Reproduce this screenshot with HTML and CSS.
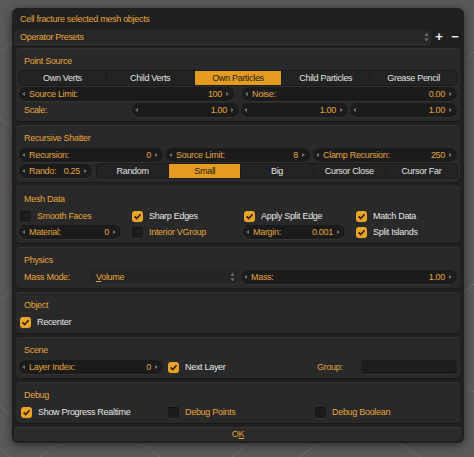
FILE: index.html
```html
<!DOCTYPE html>
<html lang="en">
<head>
  <meta charset="UTF-8">
  <title>Cell fracture selected mesh objects</title>
  <link rel="stylesheet" href="styles.css">
</head>
<body>
  <svg class="viewport-grid" width="474" height="457" viewBox="0 0 474 457">
    <path d="M0 52 L12 42 M0 118 L12 128 M0 300 L12 290 M0 405 L12 418 M0 448 L10 457 M60 443 L40 457 M140 443 L160 457 M250 443 L232 457 M318 443 L300 457 M400 443 L420 457 M464 60 L474 52 M464 380 L474 392" stroke="#6a6a6a" stroke-width="1" fill="none"/>
    <path d="M0 176 L12 186" stroke="#7a5656" stroke-width="1"/>
    <path d="M464 292 L474 284" stroke="#5f7a5f" stroke-width="1"/>
  </svg>

  <svg style="display: none;">
    <symbol viewBox="0 0 11 11" id="icon-check">
      <path d="M2.6 5.4 L4.7 7.6 L8.6 3.2" fill="none" stroke="#3a2604" stroke-width="1.7"/>
    </symbol>
    <symbol viewBox="0 0 5 10" id="icon-updown">
      <path d="M2.5 0.5 L4.5 3.8 L0.5 3.8 Z M2.5 9.5 L4.5 6.2 L0.5 6.2 Z" fill="#6c6c6c"/>
    </symbol>
  </svg>

  <div class="window">
    <div class="title">Cell fracture selected mesh objects</div>

    <div class="presets">
      <div class="preset-menu">
        <span>Operator Presets</span>
        <svg class="updown"><use xlink:href="#icon-updown"></use></svg>
      </div>
      <span class="tool-btn">+</span>
      <span class="tool-btn">&minus;</span>
    </div>

    <section class="panel">
      <h2>Point Source</h2>
      <div class="row radio">
        <span>Own Verts</span>
        <span>Child Verts</span>
        <span class="sel">Own Particles</span>
        <span>Child Particles</span>
        <span>Grease Pencil</span>
      </div>
      <div class="row gap8">
        <div class="num"><span class="lbl">Source Limit:</span><span class="val">100</span></div>
        <div class="num"><span class="lbl">Noise:</span><span class="val">0.00</span></div>
      </div>
      <div class="row gap2">
        <span class="row-label scale-label">Scale:</span>
        <div class="num"><span class="val">1.00</span></div>
        <div class="num"><span class="val">1.00</span></div>
        <div class="num"><span class="val">1.00</span></div>
      </div>
    </section>

    <section class="panel">
      <h2>Recursive Shatter</h2>
      <div class="row gap3">
        <div class="num"><span class="lbl">Recursion:</span><span class="val">0</span></div>
        <div class="num"><span class="lbl">Source Limit:</span><span class="val">8</span></div>
        <div class="num"><span class="lbl">Clamp Recursion:</span><span class="val">250</span></div>
      </div>
      <div class="row">
        <div class="num rando"><span class="lbl">Rando:</span><span class="val">0.25</span></div>
        <div class="radio rando-modes">
          <span>Random</span>
          <span class="sel">Small</span>
          <span>Big</span>
          <span>Cursor Close</span>
          <span>Cursor Far</span>
        </div>
      </div>
    </section>

    <section class="panel">
      <h2>Mesh Data</h2>
      <div class="grid4">
        <label class="check"><span class="box"></span>Smooth Faces</label>
        <label class="check on"><span class="box"><svg><use xlink:href="#icon-check"></use></svg></span>Sharp Edges</label>
        <label class="check on"><span class="box"><svg><use xlink:href="#icon-check"></use></svg></span>Apply Split Edge</label>
        <label class="check on"><span class="box"><svg><use xlink:href="#icon-check"></use></svg></span>Match Data</label>
        <div class="num"><span class="lbl">Material:</span><span class="val">0</span></div>
        <label class="check"><span class="box"></span>Interior VGroup</label>
        <div class="num"><span class="lbl">Margin:</span><span class="val">0.001</span></div>
        <label class="check on"><span class="box"><svg><use xlink:href="#icon-check"></use></svg></span>Split Islands</label>
      </div>
    </section>

    <section class="panel">
      <h2>Physics</h2>
      <div class="row gap3">
        <span class="row-label mass-label">Mass Mode:</span>
        <div class="dropdown">
          <span><u>V</u>olume</span>
          <svg class="updown"><use xlink:href="#icon-updown"></use></svg>
        </div>
        <div class="num mass"><span class="lbl">Mass:</span><span class="val">1.00</span></div>
      </div>
    </section>

    <section class="panel">
      <h2>Object</h2>
      <div class="row">
        <label class="check on"><span class="box"><svg><use xlink:href="#icon-check"></use></svg></span>Recenter</label>
      </div>
    </section>

    <section class="panel">
      <h2>Scene</h2>
      <div class="grid3">
        <div class="num"><span class="lbl">Layer Index:</span><span class="val">0</span></div>
        <label class="check on"><span class="box"><svg><use xlink:href="#icon-check"></use></svg></span>Next Layer</label>
        <div class="group">
          <span class="group-label">Group:</span>
          <span class="text-field"></span>
        </div>
      </div>
    </section>

    <section class="panel">
      <h2>Debug</h2>
      <div class="grid3">
        <label class="check on"><span class="box"><svg><use xlink:href="#icon-check"></use></svg></span>Show Progress Realtime</label>
        <label class="check"><span class="box"></span>Debug Points</label>
        <label class="check"><span class="box"></span>Debug Boolean</label>
      </div>
    </section>

    <div class="ok-btn">O<u>K</u></div>
  </div>
</body>
</html>
```

FILE: styles.css
```css
body {
  margin: 0;
  padding: 0;
  height: 457px;
  overflow: hidden;
  position: relative;
  background-color: #5a5a5a;
  font-family: "Liberation Sans", Arial, sans-serif;
  font-size: 9px;
  letter-spacing: -0.3px;
  color: #e4a43a;
}
.viewport-grid {
  position: absolute;
  left: 0;
  top: 0;
}
.window {
  position: relative;
  margin: 8px 0 0 12px;
  width: 452px;
  box-sizing: border-box;
  padding: 0 2px 2px;
  background-color: #202020;
  border-radius: 6px;
  box-shadow: 0 2px 10px rgba(0, 0, 0, 0.55);
}
.title {
  height: 22px;
  line-height: 22px;
  padding-left: 6px;
}

/* presets bar */
.presets {
  display: flex;
  align-items: center;
  height: 14px;
}
.preset-menu {
  width: 417px;
  height: 14px;
  display: flex;
  align-items: center;
  justify-content: space-between;
  padding: 0 2px 0 6px;
  box-sizing: border-box;
  background-color: #282828;
  border-radius: 3px;
  box-shadow: 0 1px 0 #333;
}
.updown {
  width: 5px;
  height: 10px;
}
.tool-btn {
  width: 14px;
  height: 14px;
  line-height: 13px;
  margin-left: 1px;
  text-align: center;
  color: #f2f2f2;
  font-size: 13px;
  font-weight: bold;
}
.tool-btn + .tool-btn {
  margin-left: 2px;
}

/* panels */
.panel {
  margin: 4px 2px 0;
  padding: 6px 3px 4px;
  display: flex;
  flex-direction: column;
  gap: 2px;
  background-color: #292929;
  border-radius: 4px;
  box-shadow: inset 0 1px 0 #323232, 0 1px 0 #191919;
}
.panel h2 {
  margin: 0;
  height: 15px;
  line-height: 15px;
  padding-left: 5px;
  font-size: 9px;
  font-weight: normal;
}
.row {
  display: flex;
  height: 14px;
}
.gap2 { gap: 2px; }
.gap3 { gap: 3px; }
.gap8 { gap: 8px; }
.row-label {
  line-height: 14px;
  padding-left: 5px;
  box-sizing: border-box;
  flex: none;
}
.scale-label { width: 111px; }
.mass-label { width: 68px; }

/* radio buttons */
.radio {
  display: flex;
  height: 14px;
  border-radius: 4px;
  overflow: hidden;
  background-color: #232323;
  box-shadow: 0 0 0 1px #1a1a1a, 0 1px 0 1px #303030;
}
.radio span {
  flex: 1;
  text-align: center;
  line-height: 14px;
  color: #e2e2e2;
}
.radio span + span {
  border-left: 1px solid #1b1b1b;
}
.radio .sel {
  background-color: #e49b1f;
  color: #1d1d1d;
}
.rando-modes {
  flex: 1;
  margin-left: 5px;
}

/* number fields */
.num {
  flex: 1;
  min-width: 0;
  height: 14px;
  display: flex;
  align-items: center;
  padding: 0 5px 0 3px;
  background-color: #1b1b1b;
  border-radius: 7px;
  box-shadow: 0 1px 0 #333;
  white-space: nowrap;
}
.num::before,
.num::after {
  content: "";
  flex: none;
  border-style: solid;
  border-color: transparent;
}
.num::before {
  border-width: 2.5px 3px 2.5px 0;
  border-right-color: #6e6e6e;
  margin-right: 4px;
}
.num::after {
  border-width: 2.5px 0 2.5px 3px;
  border-left-color: #6e6e6e;
  margin-left: 4px;
}
.num .val {
  margin-left: auto;
}
.rando {
  flex: none;
  width: 73px;
  box-sizing: border-box;
}
.mass {
  flex: none;
  width: 216px;
  box-sizing: border-box;
}

/* dropdown */
.dropdown {
  flex: 1;
  height: 14px;
  display: flex;
  align-items: center;
  justify-content: space-between;
  padding: 0 3px 0 6px;
  background-color: #252525;
  border-radius: 3px;
  box-shadow: 0 1px 0 #313131;
}

/* checkboxes */
.check {
  display: flex;
  align-items: center;
  gap: 6px;
  height: 14px;
  padding-left: 1px;
  white-space: nowrap;
}
.check .box {
  flex: none;
  width: 11px;
  height: 11px;
  border-radius: 3px;
  background-color: #1c1c1c;
  box-shadow: inset 0 1px 1px #111, 0 1px 0 #333;
}
.check .box svg {
  display: block;
  width: 11px;
  height: 11px;
}
.check.on {
  color: #e6e6e6;
}
.check.on .box {
  background-color: #eba42a;
  box-shadow: 0 1px 0 #333;
}

/* grids */
.grid4 {
  display: grid;
  grid-template-columns: repeat(4, 1fr);
  grid-auto-rows: 14px;
  column-gap: 10px;
  row-gap: 2px;
}
.grid3 {
  display: grid;
  grid-template-columns: repeat(3, 1fr);
  grid-auto-rows: 14px;
  column-gap: 3px;
}
.grid3 .check {
  padding-left: 2px;
}
.group {
  display: flex;
  height: 14px;
}
.group-label {
  width: 48px;
  padding-left: 4px;
  box-sizing: border-box;
  line-height: 14px;
}
.text-field {
  flex: 1;
  background-color: #1d1d1d;
  border-radius: 3px;
  box-shadow: 0 1px 0 #333;
}

/* ok button */
.ok-btn {
  margin-top: 4px;
  height: 14px;
  line-height: 14px;
  text-align: center;
  background-color: #2a2a2a;
  border-radius: 3px;
  box-shadow: inset 0 1px 0 #333;
}
```
